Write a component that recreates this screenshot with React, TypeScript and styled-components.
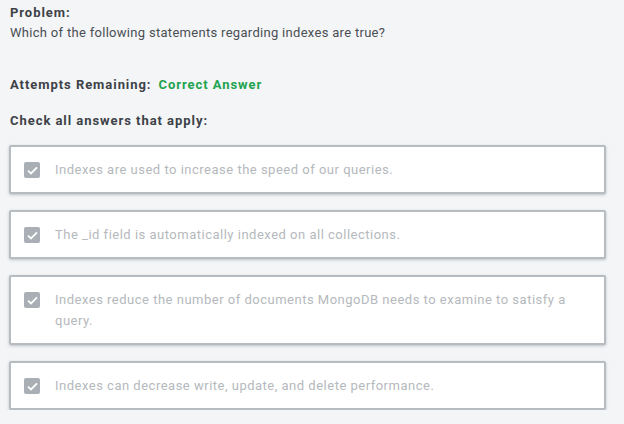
import React from "react";
import styled, { createGlobalStyle } from "styled-components";

const GlobalStyle = createGlobalStyle`
  html, body {
    margin: 0;
    padding: 0;
    background: #f4f5f7;
  }
  body {
    font-family: Roboto, "Liberation Sans", Arial, sans-serif;
  }
`;

const Page = styled.div`
  padding: 3px 18px 0 9px;
  color: #3d4247;
`;

const Label = styled.div`
  font-size: 13px;
  font-weight: 700;
  line-height: 20px;
  padding-left: 1px;
  letter-spacing: 0.95px;
`;

const Question = styled.div`
  font-size: 13px;
  line-height: 20px;
  padding-left: 1px;
  letter-spacing: 0.3px;
  color: #4a4f54;
`;

const StatusRow = styled(Label)`
  margin-top: 32px;
  display: flex;
  gap: 7px;
`;

const Green = styled.span`
  color: #21a34f;
`;

const Instruction = styled(Label)`
  margin-top: 16px;
`;

const List = styled.div`
  margin-top: 14px;
  display: flex;
  flex-direction: column;
  gap: 16px;
`;

const Card = styled.div`
  background: #ffffff;
  border: 2px solid #b7bcc1;
  border-radius: 2px;
  box-shadow: 0 1px 3px rgba(120, 128, 136, 0.45);
  padding: 12px 16px 12px 13px;
  display: flex;
  align-items: flex-start;
  gap: 15px;
`;

const Box = styled.span`
  flex: none;
  width: 16px;
  height: 16px;
  margin-top: 3px;
  border-radius: 2px;
  background: #a9afb5;
  display: flex;
  align-items: center;
  justify-content: center;
`;

const AnswerText = styled.div`
  font-size: 13px;
  line-height: 21px;
  letter-spacing: 0.5px;
  color: #b5b9bd;
`;

const answers = [
  "Indexes are used to increase the speed of our queries.",
  "The _id field is automatically indexed on all collections.",
  "Indexes reduce the number of documents MongoDB needs to examine to satisfy a query.",
  "Indexes can decrease write, update, and delete performance.",
];

function Check() {
  return (
    <svg width="11" height="9" viewBox="0 0 11 9">
      <path d="M1 4.6 L4 7.4 L10 1.4" fill="none" stroke="#ffffff" strokeWidth="1.8" />
    </svg>
  );
}

export default function App() {
  return (
    <Page>
      <GlobalStyle />
      <Label>Problem:</Label>
      <Question>Which of the following statements regarding indexes are true?</Question>
      <StatusRow>
        Attempts Remaining: <Green>Correct Answer</Green>
      </StatusRow>
      <Instruction>Check all answers that apply:</Instruction>
      <List>
        {answers.map((a) => (
          <Card key={a}>
            <Box>
              <Check />
            </Box>
            <AnswerText>{a}</AnswerText>
          </Card>
        ))}
      </List>
    </Page>
  );
}
